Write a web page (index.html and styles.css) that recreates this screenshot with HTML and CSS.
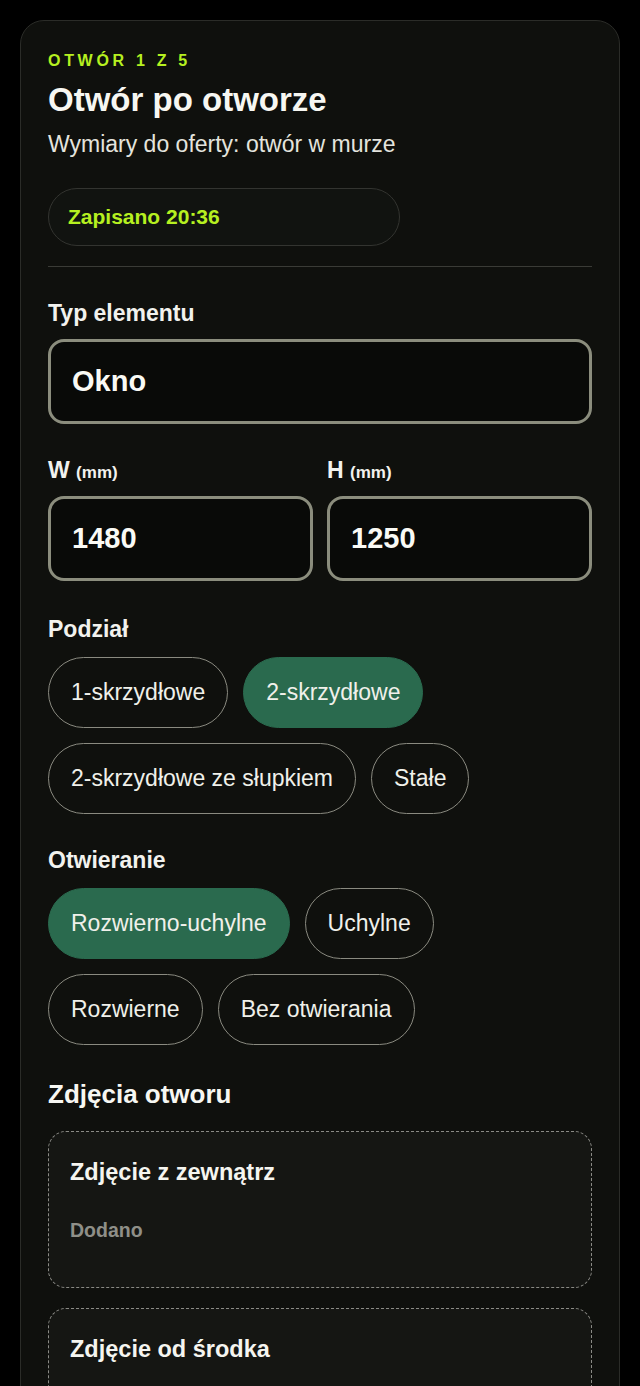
FILE: index.html
```html
<!DOCTYPE html>
<html lang="pl">
<head>
  <meta charset="UTF-8">
  <meta name="viewport" content="width=device-width, initial-scale=1.0">
  <title>Otwór po otworze</title>
  <link rel="stylesheet" href="styles.css">
</head>
<body>
  <div class="panel">
    <div class="panel_eyebrow">Otwór 1 z 5</div>
    <h1 class="panel_title">Otwór po otworze</h1>
    <p class="panel_sub">Wymiary do oferty: otwór w murze</p>
    <div class="saved_pill">Zapisano 20:36</div>
    <div class="panel_divider"></div>

    <div class="field">
      <div class="field_label">Typ elementu</div>
      <div class="field_input">Okno</div>
    </div>

    <div class="field_row">
      <div class="field">
        <div class="field_label">W <small>(mm)</small></div>
        <div class="field_input">1480</div>
      </div>
      <div class="field">
        <div class="field_label">H <small>(mm)</small></div>
        <div class="field_input">1250</div>
      </div>
    </div>

    <div class="field field_chips">
      <div class="field_label field_label_chips">Podział</div>
      <div class="chips">
        <span class="chip">1-skrzydłowe</span>
        <span class="chip chip_active">2-skrzydłowe</span>
        <span class="chip">2-skrzydłowe ze słupkiem</span>
        <span class="chip">Stałe</span>
      </div>
    </div>

    <div class="field">
      <div class="field_label field_label_chips">Otwieranie</div>
      <div class="chips">
        <span class="chip chip_active">Rozwierno-uchylne</span>
        <span class="chip">Uchylne</span>
        <span class="chip">Rozwierne</span>
        <span class="chip">Bez otwierania</span>
      </div>
    </div>

    <h2 class="photos_title">Zdjęcia otworu</h2>
    <div class="photo_slot">
      <div class="photo_slot_title">Zdjęcie z zewnątrz</div>
      <div class="photo_slot_state">Dodano</div>
    </div>
    <div class="photo_slot">
      <div class="photo_slot_title">Zdjęcie od środka</div>
      <div class="photo_slot_state">Dodano</div>
    </div>
  </div>
</body>
</html>
```

FILE: styles.css
```css
html, body {
  margin: 0;
  background-color: #000;
}
body {
  padding: 20px;
  font-family: "Liberation Sans", Arial, sans-serif;
  color: #f2f2ee;
}
.panel {
  background-color: #0f100d;
  border: 1px solid #2b2c28;
  border-radius: 24px;
  padding: 30px 27px 40px;
}
.panel_eyebrow {
  font-size: 16px;
  font-weight: bold;
  letter-spacing: 3.7px;
  text-transform: uppercase;
  color: #b6f020;
  line-height: 20px;
}
.panel_title {
  margin: 9px 0 0;
  font-size: 33px;
  line-height: 40px;
  font-weight: bold;
  color: #f7f7f2;
}
.panel_sub {
  margin: 9px 0 0;
  font-size: 23px;
  line-height: 30px;
  color: #e4e4de;
}
.saved_pill {
  margin-top: 29px;
  width: 312px;
  height: 56px;
  line-height: 56px;
  padding: 0 19px;
  border: 1px solid #333430;
  border-radius: 30px;
  background-color: #111310;
  color: #b6f020;
  font-size: 21px;
  font-weight: bold;
}
.panel_divider {
  margin-top: 20px;
  height: 1px;
  background-color: #3a3b36;
}
.field {
  margin-top: 33px;
}
.field_chips {
  margin-top: 35px;
}
.field_label {
  font-size: 23px;
  line-height: 26px;
  height: 26px;
  font-weight: bold;
  color: #f2f2ee;
  margin-bottom: 13px;
}
.field_label small {
  font-size: 17px;
  line-height: 1;
}
.field_label_chips {
  margin-bottom: 15px;
}
.field_input {
  height: 79px;
  line-height: 79px;
  padding: 0 21px;
  border: 3px solid #8b8d7d;
  border-radius: 16px;
  background-color: #090a08;
  font-size: 29px;
  font-weight: bold;
  color: #fafaf5;
}
.field_row {
  display: grid;
  grid-template-columns: 1fr 1fr;
  column-gap: 14px;
}
.chips {
  display: flex;
  flex-wrap: wrap;
  gap: 15px 15px;
}
.chip {
  height: 69px;
  line-height: 69px;
  padding: 0 22px;
  border: 1px solid #8a8a80;
  border-radius: 36px;
  font-size: 23px;
  color: #f0f0ea;
}
.chip_active {
  border-color: #2a6a4e;
  background-color: #2a6a4e;
}
.photos_title {
  margin: 33px 0 0;
  font-size: 26px;
  line-height: 32px;
  font-weight: bold;
  color: #f7f7f2;
}
.photo_slot {
  margin-top: 21px;
  height: 155px;
  padding: 0 21px;
  border: 1px dashed #8a8a85;
  border-radius: 18px;
  background-color: #151613;
}
.photo_slot + .photo_slot {
  margin-top: 20px;
}
.photo_slot_title {
  margin-top: 26px;
  font-size: 23.5px;
  line-height: 28px;
  font-weight: bold;
  color: #f5f5f0;
}
.photo_slot_state {
  margin-top: 33px;
  font-size: 19.5px;
  line-height: 22px;
  font-weight: bold;
  color: #8f8f88;
}
```
